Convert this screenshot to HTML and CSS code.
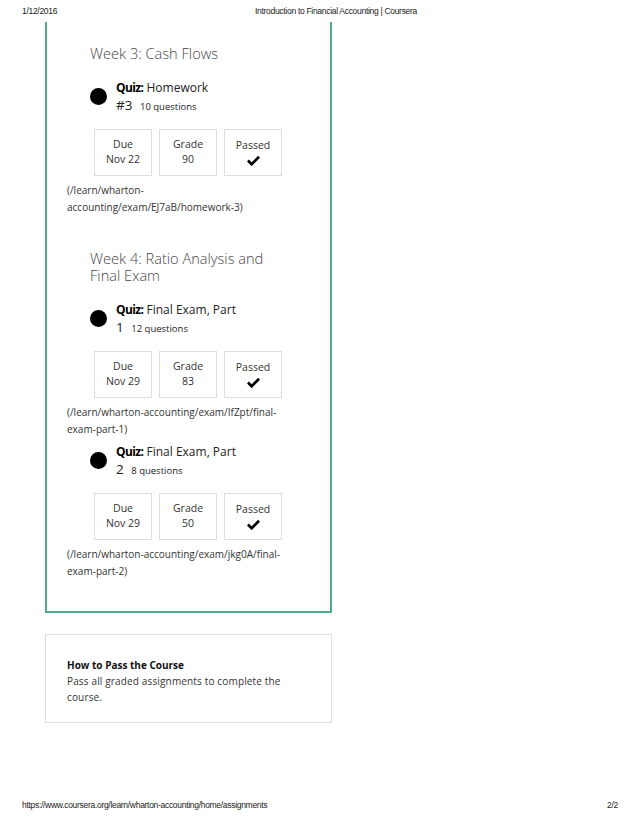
FILE: index.html
```html
<!DOCTYPE html>
<html>
<head>
<meta charset="utf-8">
<link rel="stylesheet" href="styles.css">
</head>
<body>
<header class="print-head">
  <span class="ph-date">1/12/2016</span>
  <span class="ph-title">Introduction to Financial Accounting | Coursera</span>
</header>

<main class="page">
  <section class="card">
    <div class="week">
      <h2 class="week-title">Week 3: Cash Flows</h2>
      <div class="item">
        <div class="quiz">
          <span class="dot"></span>
          <div class="quiz-name"><b>Quiz:</b> Homework <span class="nw">#3 <small>10 questions</small></span></div>
        </div>
        <div class="stats">
          <div class="stat"><span>Due</span><span>Nov 22</span></div>
          <div class="stat"><span>Grade</span><span>90</span></div>
          <div class="stat"><span>Passed</span><svg class="check" viewBox="0 0 14 11"><path d="M1 5.5 L5 9.5 L13 1.5" /></svg></div>
        </div>
        <p class="link">(/learn/wharton-accounting/exam/EJ7aB/homework-3)</p>
      </div>
    </div>

    <div class="week">
      <h2 class="week-title">Week 4: Ratio Analysis and Final Exam</h2>
      <div class="item">
        <div class="quiz">
          <span class="dot"></span>
          <div class="quiz-name"><b>Quiz:</b> Final Exam, Part <span class="nw">1 <small>12 questions</small></span></div>
        </div>
        <div class="stats">
          <div class="stat"><span>Due</span><span>Nov 29</span></div>
          <div class="stat"><span>Grade</span><span>83</span></div>
          <div class="stat"><span>Passed</span><svg class="check" viewBox="0 0 14 11"><path d="M1 5.5 L5 9.5 L13 1.5" /></svg></div>
        </div>
        <p class="link">(/learn/wharton-accounting/exam/IfZpt/final-exam-part-1)</p>
      </div>
      <div class="item">
        <div class="quiz">
          <span class="dot"></span>
          <div class="quiz-name"><b>Quiz:</b> Final Exam, Part <span class="nw">2 <small>8 questions</small></span></div>
        </div>
        <div class="stats">
          <div class="stat"><span>Due</span><span>Nov 29</span></div>
          <div class="stat"><span>Grade</span><span>50</span></div>
          <div class="stat"><span>Passed</span><svg class="check" viewBox="0 0 14 11"><path d="M1 5.5 L5 9.5 L13 1.5" /></svg></div>
        </div>
        <p class="link">(/learn/wharton-accounting/exam/jkg0A/final-exam-part-2)</p>
      </div>
    </div>
  </section>

  <section class="info">
    <h3 class="info-title">How to Pass the Course</h3>
    <p class="info-text">Pass all graded assignments to complete the course.</p>
  </section>
</main>

<footer class="print-foot">
  <span>https://www.coursera.org/learn/wharton-accounting/home/assignments</span>
  <span>2/2</span>
</footer>
</body>
</html>
```

FILE: styles.css
```css
html, body {
  margin: 0;
  padding: 0;
  background: #fff;
}
body {
  width: 638px;
  height: 826px;
  display: flex;
  flex-direction: column;
  font-family: "Open Sans", "Liberation Sans", sans-serif;
  color: #333;
}
.print-head {
  height: 22px;
  position: relative;
  font-family: "Liberation Sans", Arial, sans-serif;
  font-size: 8.5px;
  letter-spacing: -0.3px;
  color: #222;
  display: flex;
  align-items: center;
  padding-left: 22px;
}
.ph-title {
  position: absolute;
  left: 255px;
  top: 6px;
}
.page {
  flex: 1;
  display: flex;
  flex-direction: column;
}
.card {
  margin-left: 45px;
  width: 263px;
  border: 2px solid #4caf85;
  border-top: none;
  padding: 0 0 31px 20px;
  box-sizing: content-box;
}
.week {
  padding-top: 23px;
}
.week + .week {
  padding-top: 34px;
}
.week-title {
  margin: 0 0 0 23px;
  width: 190px;
  font-size: 14.6px;
  font-weight: 300;
  line-height: 17.5px;
  color: #444;
}
.item {
  width: 224px;
}
.quiz {
  display: flex;
  align-items: center;
  margin: 16px 0 0 23px;
}
.item + .item .quiz {
  margin-top: 5px;
}
.dot {
  width: 17px;
  height: 17px;
  border-radius: 50%;
  background: #000;
  flex: none;
  margin-right: 9px;
}
.quiz-name {
  width: 122px;
  font-size: 12px;
  line-height: 18px;
  color: #222;
}
.quiz-name b {
  font-weight: 700;
  letter-spacing: -0.6px;
  color: #000;
}
.nw {
  white-space: nowrap;
  font-size: 13.5px;
  line-height: 17px;
}
.nw small {
  font-size: 9.5px;
  margin-left: 4px;
}
.stats {
  display: flex;
  gap: 7px;
  margin: 14px 0 0 27px;
}
.stat {
  width: 56px;
  height: 45px;
  border: 1px solid #ddd;
  display: flex;
  flex-direction: column;
  align-items: center;
  justify-content: center;
  font-size: 10.5px;
  line-height: 15px;
  color: #333;
}
.check {
  width: 13px;
  height: 11px;
  margin-top: 2px;
}
.check path {
  fill: none;
  stroke: #000;
  stroke-width: 3;
}
.link {
  margin: 6px 0 0 0;
  font-size: 10px;
  line-height: 17px;
  color: #333;
}
.info {
  margin: 21px 0 0 45px;
  width: 287px;
  height: 89px;
  border: 1px solid #ddd;
  padding: 22px 40px 0 21px;
  box-sizing: border-box;
}
.info-title {
  margin: 0;
  font-size: 10px;
  font-weight: 700;
  line-height: 16px;
  color: #111;
}
.info-text {
  margin: 0;
  font-size: 10px;
  letter-spacing: 0.15px;
  line-height: 16px;
  color: #333;
}
.print-foot {
  height: 26px;
  display: flex;
  justify-content: space-between;
  align-items: flex-start;
  padding: 0 20px 0 22px;
  font-family: "Liberation Sans", Arial, sans-serif;
  font-size: 8.5px;
  letter-spacing: -0.3px;
  color: #222;
}
```
